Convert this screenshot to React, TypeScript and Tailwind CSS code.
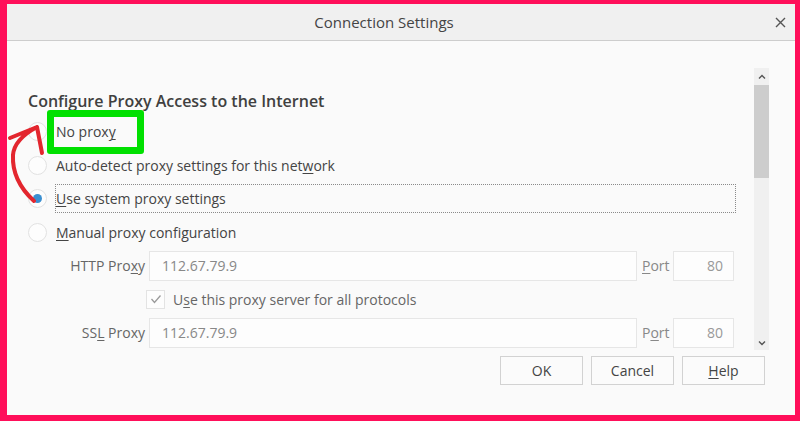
import type { ReactNode } from "react";

const font = { fontFamily: '"Open Sans", "Noto Sans", sans-serif' };

function U({ children }: { children: ReactNode }) {
  return <span className="underline underline-offset-2 decoration-1">{children}</span>;
}

function Radio({ checked = false }: { checked?: boolean }) {
  return (
    <span className="w-[19px] h-[19px] shrink-0 rounded-full border border-[#e2e2e2] bg-[#fdfdfd] flex items-center justify-center">
      {checked && <span className="w-[9px] h-[9px] rounded-full bg-[#3a8fd0]" />}
    </span>
  );
}

function RadioRow({ children, checked, focus }: { children: ReactNode; checked?: boolean; focus?: boolean }) {
  return (
    <div className="h-[33.5px] flex items-center gap-[9px]">
      <Radio checked={checked} />
      <div
        className={
          focus
            ? "flex-1 h-[29px] flex items-center border border-dotted border-[#8a8a8a] -ml-[1px]"
            : "flex-1 flex items-center"
        }
      >
        <span className="text-[14px] text-[#444]">{children}</span>
      </div>
    </div>
  );
}

function Row({ label, port }: { label: ReactNode; port: ReactNode }) {
  return (
    <div className="h-[33.5px] flex items-center">
      <div className="w-[117px] text-right text-[14px] text-[#666]">{label}</div>
      <div className="ml-[4px] w-[488px] h-[30px] border border-[#e6e6e6] bg-[#fdfdfd] flex items-center pl-[12px] text-[14px] text-[#888]">
        112.67.79.9
      </div>
      <div className="ml-[5px] w-[31px] text-[14px] text-[#888]">{port}</div>
      <div className="w-[61px] h-[30px] border border-[#e6e6e6] bg-[#fdfdfd] flex items-center justify-end pr-[10px] text-[14px] text-[#999]">
        80
      </div>
    </div>
  );
}

function Btn({ children }: { children: ReactNode }) {
  return (
    <div className="w-[83px] h-[29px] border border-[#d2d2d2] bg-[#fbfbfb] flex items-center justify-center text-[14px] text-[#444]">
      {children}
    </div>
  );
}

export default function App() {
  return (
    <div className="w-[800px] h-[421px] bg-[#ff0f5a] pt-[4px] pl-[7px] pr-[5px] pb-[6px]" style={font}>
      <div className="relative w-full h-full bg-[#fafafa] flex flex-col">
        {/* title bar */}
        <div className="h-[37px] shrink-0 bg-[#f0f0f0] border-b border-[#cdcdcd] flex items-center">
          <div className="flex-1" />
          <span className="text-[15px] text-[#444]">Connection Settings</span>
          <div className="flex-1" />
          <div className="w-[34px] flex items-center justify-start pl-[14px]">
            <svg width="11" height="11" viewBox="0 0 11 11" stroke="#555" strokeWidth="1.4">
              <path d="M1 1 L10 10 M10 1 L1 10" />
            </svg>
          </div>
        </div>

        {/* scroll area */}
        <div className="mt-[27px] h-[282px] flex overflow-hidden">
          <div className="flex-1 pl-[21px] pr-[18px]">
            <div className="mt-[22px] h-[23px] text-[16px] font-semibold text-[#404040] leading-[23px]">
              Configure Proxy Access to the Internet
            </div>
            <div className="mt-[2px]">
              <RadioRow>
                No prox<U>y</U>
              </RadioRow>
              <RadioRow>
                Auto-detect proxy settings for this net<U>w</U>ork
              </RadioRow>
              <RadioRow checked focus>
                <U>U</U>se system proxy settings
              </RadioRow>
              <RadioRow>
                <U>M</U>anual proxy configuration
              </RadioRow>
              <Row
                label={
                  <>
                    HTTP Pro<U>x</U>y
                  </>
                }
                port={
                  <>
                    <U>P</U>ort
                  </>
                }
              />
              <div className="h-[33.5px] flex items-center">
                <div className="ml-[118px] w-[19px] h-[19px] border border-[#e3e3e3] bg-[#fdfdfd] flex items-center justify-center">
                  <svg width="12" height="10" viewBox="0 0 12 10" fill="none" stroke="#9a9a9a" strokeWidth="1.3">
                    <path d="M1.5 5 L4.5 8.5 L10.5 1.5" />
                  </svg>
                </div>
                <span className="ml-[8px] text-[14px] text-[#666]">
                  U<U>s</U>e this proxy server for all protocols
                </span>
              </div>
              <Row
                label={
                  <>
                    SS<U>L</U> Proxy
                  </>
                }
                port={
                  <>
                    P<U>o</U>rt
                  </>
                }
              />
            </div>
          </div>
          {/* scrollbar */}
          <div className="w-[15px] h-full bg-[#f0f0f0] flex flex-col mr-[26px]">
            <div className="h-[17px] flex items-center justify-center">
              <svg width="8" height="5" viewBox="0 0 8 5" fill="none" stroke="#555" strokeWidth="1.4">
                <path d="M1 4.5 L4 1.5 L7 4.5" />
              </svg>
            </div>
            <div className="h-[93px] bg-[#cdcdcd]" />
            <div className="flex-1" />
            <div className="h-[14px] flex items-center justify-center">
              <svg width="8" height="5" viewBox="0 0 8 5" fill="none" stroke="#555" strokeWidth="1.4">
                <path d="M1 0.5 L4 3.5 L7 0.5" />
              </svg>
            </div>
          </div>
        </div>

        {/* buttons */}
        <div className="mt-[6px] flex justify-end gap-[8px] pr-[30px]">
          <Btn>OK</Btn>
          <Btn>Cancel</Btn>
          <Btn>
            <U>H</U>elp
          </Btn>
        </div>

        {/* annotation: green highlight box */}
        <div className="absolute left-[40px] top-[106px] w-[97px] h-[44px] border-[7px] border-[#00e000] rounded-[3px]" />
        {/* annotation: red arrow */}
        <svg className="absolute left-[-7px] top-[-4px]" width="80" height="230" viewBox="0 0 80 230" fill="none">
          <path
            d="M34 201 C22 190 12 175 13 155 C14 143 24 134 37 127 M10 138 L37 127 L42 153"
            stroke="#e3262e"
            strokeWidth="4"
            strokeLinecap="round"
            strokeLinejoin="round"
          />
        </svg>
      </div>
    </div>
  );
}
